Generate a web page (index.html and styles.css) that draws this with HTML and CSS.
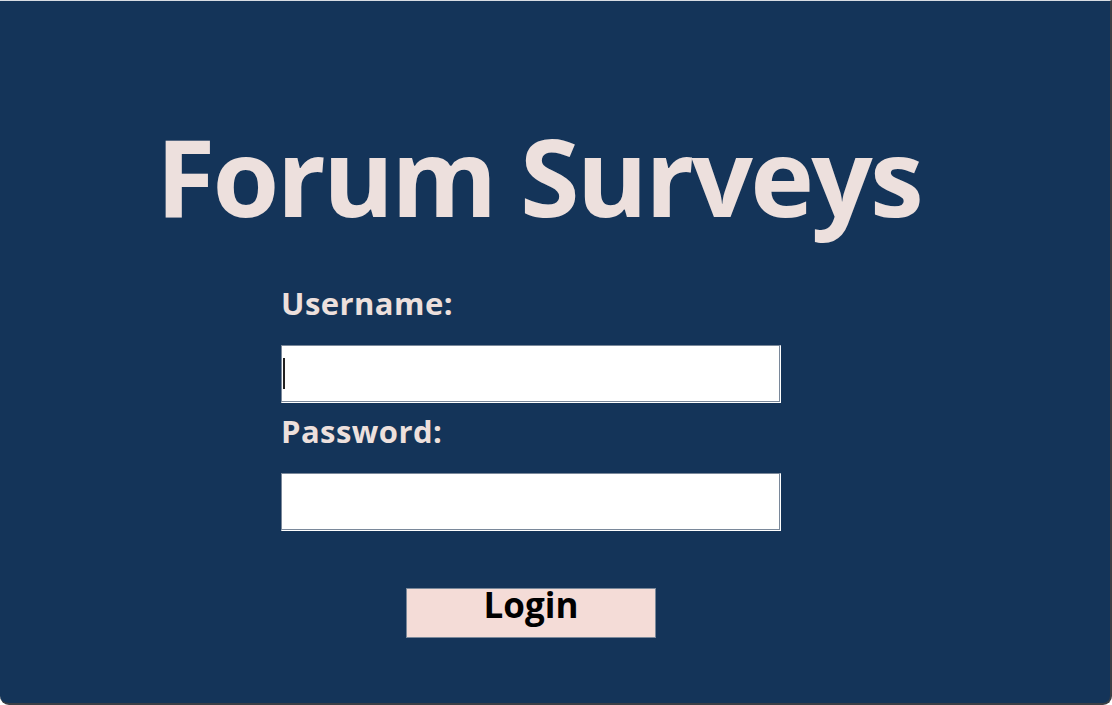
FILE: index.html
```html
<!DOCTYPE html>
<html lang="en">
<head>
<meta charset="utf-8">
<title>Forum Surveys</title>
<link rel="stylesheet" href="styles.css">
</head>
<body>
<div class="window">
  <h1 class="title">Forum Surveys</h1>
  <form class="login-form" onsubmit="return false;">
    <label class="label" for="username">Username:</label>
    <div class="field-wrap">
      <input class="field" id="username" type="text">
      <span class="caret"></span>
    </div>
    <label class="label label-password" for="password">Password:</label>
    <div class="field-wrap">
      <input class="field" id="password" type="password">
    </div>
    <button class="login-btn" type="submit">Login</button>
  </form>
</div>
</body>
</html>
```
FILE: styles.css
```css
html, body {
  margin: 0;
  padding: 0;
  background: #ffffff;
}

.window {
  box-sizing: border-box;
  width: 1112px;
  height: 705px;
  background: #143459;
  border-top: 1px solid #d8dde3;
  border-right: 2px solid #3b3f45;
  border-bottom: 2px solid #3b3f45;
  border-radius: 0 0 9px 9px;
  font-family: "Open Sans", "DejaVu Sans", sans-serif;
  padding-top: 121px;
}

.title {
  margin: 0;
  padding-left: 156px;
  font-size: 108px;
  line-height: 1;
  font-weight: 700;
  letter-spacing: -2.7px;
  color: #ede0dd;
}

.login-form {
  display: flex;
  flex-direction: column;
  align-items: flex-start;
  padding-left: 281px;
  margin-top: 58px;
}

.label {
  display: block;
  font-size: 31px;
  line-height: 1;
  font-weight: 700;
  letter-spacing: 0.45px;
  color: #ede0dd;
}

.label-password {
  margin-top: 13px;
}

.field-wrap {
  position: relative;
  margin-top: 26px;
}

.field {
  display: block;
  box-sizing: border-box;
  width: 500px;
  height: 58px;
  margin: 0;
  padding: 0 6px;
  background: #ffffff;
  border: 1px solid;
  border-color: #7a889a #ffffff #ffffff #7a889a;
  box-shadow: inset -1px -1px 0 #7a889a;
  outline: none;
  font-family: "Open Sans", sans-serif;
  font-size: 24px;
}

.caret {
  position: absolute;
  left: 2px;
  top: 13px;
  width: 2px;
  height: 31px;
  background: #222222;
}

.login-btn {
  box-sizing: border-box;
  margin-top: 57px;
  margin-left: 125px;
  width: 250px;
  height: 50px;
  padding: 0;
  background: #f4dcd7;
  border: 1px solid #7a889a;
  color: #000000;
  font-family: "Open Sans", sans-serif;
  font-weight: 700;
  font-size: 35px;
  line-height: 32px;
  display: flex;
  align-items: flex-start;
  justify-content: center;
  cursor: pointer;
}
```
